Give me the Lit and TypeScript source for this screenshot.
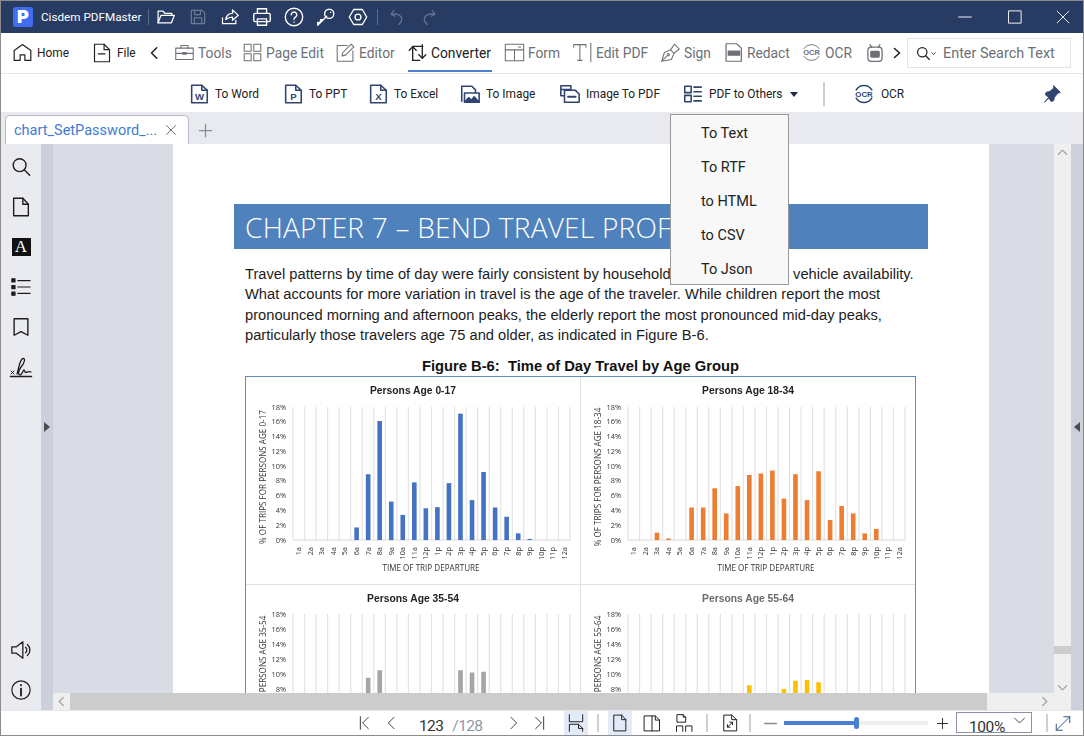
import { LitElement, css, html, svg, TemplateResult } from "lit";
import { customElement, property } from "lit/decorators.js";

const icon = (size: number, body: unknown, sw = 1.5) => html`<svg
  width=${size}
  height=${size}
  viewBox="0 0 24 24"
  fill="none"
  stroke="currentColor"
  stroke-width=${sw}
  stroke-linecap="round"
  stroke-linejoin="round"
>
  ${body}
</svg>`;

const HOURS = "1a 2a 3a 4a 5a 6a 7a 8a 9a 10a 11a 12p 1p 2p 3p 4p 5p 6p 7p 8p 9p 10p 11p 12a".split(" ");

@customElement("age-chart")
export class AgeChart extends LitElement {
  static styles = css`
    :host {
      display: block;
    }
    svg {
      display: block;
      filter: blur(0.3px);
    }
    .title {
      font: bold 10.3px "Liberation Sans", sans-serif;
      text-anchor: middle;
    }
    .tick {
      font: 7.4px "Open Sans", sans-serif;
      fill: #333;
    }
    .axis {
      font: 8.1px "Open Sans", sans-serif;
      fill: #333;
      text-anchor: middle;
    }
  `;

  @property() heading = "";
  @property() axis = "";
  @property() color = "#4472c4";
  @property() titleColor = "#222";
  @property({ type: Array }) values: number[] = [];
  @property({ type: Number }) top = 30;
  @property({ type: Number }) unit = 7.39;

  render() {
    const x0 = 47;
    const step = 277 / 24;
    const bottom = this.top + this.unit * 18;
    const ticks = [0, 2, 4, 6, 8, 10, 12, 14, 16, 18];
    return html`<svg width="334" height="207">
      <text class="title" x="167" y="16.500" style="fill:${this.titleColor}">${this.heading}</text>
      ${HOURS.concat("").map((_, i) => {
        const x = x0 + i * step;
        return svg`<line x1=${x} x2=${x} y1=${this.top} y2=${bottom} stroke="#e3e3e3" stroke-width="1.2" />`;
      })}
      <line x1=${x0} x2=${x0 + 277} y1=${bottom} y2=${bottom} stroke="#d9d9d9" />
      ${this.values.map((v, i) =>
        v
          ? svg`<rect x=${x0 + i * step + 3.6} width="4.6" y=${bottom - v * this.unit} height=${v * this.unit} fill=${this.color} />`
          : ""
      )}
      ${ticks.map(
        (t) => svg`<text class="tick" x="40" y=${bottom - t * this.unit + 2.5} text-anchor="end">${t}%</text>`
      )}
      ${HOURS.map((h, i) => {
        const x = x0 + (i + 0.5) * step + 2.5;
        return svg`<text class="tick" text-anchor="end" transform="translate(${x} ${bottom + 7}) rotate(-90)">${h}</text>`;
      })}
      <text class="axis" x="185" y=${bottom + 31}>TIME OF TRIP DEPARTURE</text>
      <text class="axis" transform="translate(20 100) rotate(-90)">${this.axis}</text>
    </svg>`;
  }
}

const docIcon = (letter: string) =>
  icon(
    22,
    svg`<path d="M4 2.500h11L21 8v13.500H4z" /><path d="M15 2.500V8h6" />
    <text x="12.500" y="18.500" font-size="10.500" font-weight="700" font-family="Liberation Sans" text-anchor="middle" fill="currentColor" stroke="none">${letter}</text>`,
    1.7
  );

const ocrMark = (size: number, sw: number) =>
  icon(
    size,
    svg`<path d="M3.500 7.500A10 10 0 0 1 20.500 7.500" /><path d="M3.500 16.500A10 10 0 0 0 20.500 16.500" />
    <text x="12" y="15" font-size="8.600" font-weight="700" font-family="Liberation Sans" text-anchor="middle" fill="currentColor" stroke="none">OCR</text>`,
    sw
  );

const titleTools: TemplateResult[] = [
  icon(20, svg`<path d="M2.500 19V5h6l2 2.500H19V10" /><path d="M2.500 19l3.500-9h16l-3.500 9z" />`),
  icon(20, svg`<path d="M4 4h13l3 3v13H4z" /><path d="M8 4v5h7V4" /><path d="M7.500 20v-7h9v7" />`),
  icon(20, svg`<path d="M3 13v7h16v-4" /><path d="M7 15c.5-5 4-7.500 8-7.500V3.500l7 6.500-7 6v-4c-3 0-6 1-8 3z" />`),
  icon(22, svg`<path d="M7 8V3h10v5" /><rect x="3" y="8" width="18" height="9" rx="1.500" /><path d="M7 14h10v7H7z" />`),
  icon(22, svg`<circle cx="12" cy="12" r="9.500" /><path d="M9 9.500a3 3 0 1 1 4.500 2.700c-1 .6-1.500 1.200-1.500 2.300" /><path d="M12 17.500v.1" />`),
  icon(22, svg`<circle cx="15.500" cy="8.500" r="5" /><path d="M12 12L3 21v-3h3v-3h3l3.800-3.800" /><path d="M17 7v.1" />`),
  icon(22, svg`<path d="M2.500 12L7.300 3.800h9.400L21.500 12l-4.800 8.200H7.300z" /><circle cx="12" cy="12" r="3.200" />`),
];

type MenuEntry = { label: string; w: number; muted?: boolean; active?: boolean; icon: TemplateResult };

const menu: MenuEntry[] = [
  { label: "Tools", w: 55, muted: true, icon: icon(21, svg`<rect x="2" y="7" width="20" height="13" /><path d="M8 7V4h8v3" /><path d="M2 13h20" /><path d="M10 12h4v2h-4z" />`, 1.2) },
  { label: "Page Edit", w: 80, muted: true, icon: icon(21, svg`<rect x="2.500" y="2.500" width="8" height="8" /><rect x="13.500" y="2.500" width="8" height="8" /><rect x="2.500" y="13.500" width="8" height="8" /><rect x="13.500" y="13.500" width="8" height="8" />`, 1.2) },
  { label: "Editor", w: 59, muted: true, icon: icon(21, svg`<path d="M14 4H2.500v18h18V10" /><path d="M8 16l1-4L18.500 2.500l3 3L12 15z" />`, 1.2) },
  { label: "Converter", w: 84, active: true, icon: icon(21, svg`<path d="M6.500 21V5.500" /><path d="M2.500 9.500l4-4 4 4" /><path d="M6.500 5H18" /><path d="M17.500 3v15.500" /><path d="M13.500 14.500l4 4 4-4" /><path d="M6.500 21h8" />`, 1.5) },
  { label: "Form", w: 55, muted: true, icon: icon(21, svg`<rect x="1.500" y="2.500" width="21" height="19" /><path d="M1.500 9h21" /><path d="M12 9v12.500" /><path d="M16.500 5.800h2.500" />`, 1.2) },
  { label: "Edit PDF", w: 75, muted: true, icon: icon(21, svg`<path d="M2 6V3h14v3" /><path d="M9 3v18" /><path d="M6.500 21h5" /><path d="M21.500 1.500v21" />`, 1.2) },
  { label: "Sign", w: 50, muted: true, icon: icon(21, svg`<path d="M2 22l3-10 7-3 4 4-3 7z" /><path d="M2 22l6.500-6.500" /><circle cx="9.500" cy="14.500" r="1.200" /><path d="M12 9l4.500-6.500L22 8l-6 5" />`, 1.2) },
  { label: "Redact", w: 65, muted: true, icon: icon(21, svg`<path d="M3.500 2h12L21 7v15H3.500z" /><path d="M6 10.500h13v4.500H6z" fill="currentColor" />`, 1.4) },
  { label: "OCR", w: 51, muted: true, icon: ocrMark(21, 1.1) },
];

const ribbon = [
  { label: "To Word", w: 69, icon: docIcon("W") },
  { label: "To PPT", w: 60, icon: docIcon("P") },
  { label: "To Excel", w: 67, icon: docIcon("X") },
  {
    label: "To Image",
    w: 75,
    icon: icon(22, svg`<path d="M3 20V3.500h11l4 4V10" /><rect x="6" y="11" width="16" height="10" /><path d="M6 21l4.500-5 3 3 3-4 5.500 6z" fill="currentColor" />`, 1.7),
  },
  {
    label: "Image To PDF",
    w: 98,
    icon: icon(22, svg`<path d="M2 3h11v4H2zM2 3v11h3" /><path d="M6 8h12l4 4v9H6z" /><path d="M10 15h8" stroke-width="2.400" />`, 1.7),
  },
];

const rail = [
  icon(22, svg`<circle cx="10.500" cy="10" r="7" /><path d="M15.500 15l6 6" />`),
  icon(22, svg`<path d="M4 2.500h10L20 9v12.500H4z" /><path d="M14 2.500V9h6" />`),
  html`<span class="letter-a">A</span>`,
  icon(22, svg`<path d="M8.500 5H22M8.500 12H22M8.500 19H22" /><path d="M2 3h3.500v3.500H2zM2 10.300h3.500v3.500H2zM2 17.500h3.500V21H2z" fill="currentColor" />`, 1.2),
  icon(22, svg`<path d="M4.500 3h15v18L12 17l-7.500 4z" />`),
  icon(
    24,
    svg`<path d="M1.500 21.500h21" /><path d="M2 16l3 3M5 16l-3 3" stroke-width="1" /><path d="M8 19C10 12 11 4 14 3.500c3-.5 1 5.500-2 8.500-3 4-3 8-1 8s3-5 4-5 .5 3 2 2.500 2-1.500 5-.5" stroke-width="1.300" />`
  ),
];

type StatusCell = { w: number; cls?: string; body?: unknown };

const status: StatusCell[] = [
  { w: 26, body: icon(16, svg`<path d="M5 2.500v19" /><path d="M17 3.500L8.500 12l8.500 8.500" />`, 1.3) },
  { w: 28, body: icon(16, svg`<path d="M15 3.500L6.500 12l8.500 8.500" />`, 1.3) },
  { w: 94, cls: "pages", body: html`<span class="page-now">123</span><span class="page-all">/128</span>` },
  { w: 26, body: icon(16, svg`<path d="M9 3.500l8.500 8.500L9 20.500" />`, 1.3) },
  { w: 26, body: icon(16, svg`<path d="M7 3.500l8.500 8.500L7 20.500" /><path d="M19 2.500v19" />`, 1.3) },
  { w: 12 },
  { w: 24, cls: "on", body: icon(20, svg`<path d="M4 2v8.500h16V2" /><path d="M4 22v-8.500h11l5 5V22" /><path d="M15 13.500v5h5" />`, 1.2) },
  { w: 20, cls: "sep" },
  { w: 24, cls: "on", body: icon(20, svg`<path d="M5 2.500h9L19 8v13.500H5z" /><path d="M14 2.500V8h5" />`, 1.2) },
  { w: 40, body: icon(20, svg`<path d="M3 3.500h13l5 5v13H3z" /><path d="M12 3.500v18" /><path d="M16 3.500v5h5" />`, 1.2) },
  { w: 24, body: icon(20, svg`<path d="M4 2h7l3 3v6H4z" /><path d="M11 2v3h3" /><path d="M3 22v-6.500h7.500V22" /><path d="M14 22v-6.500h7.500V22" />`, 1.2) },
  { w: 22, cls: "sep" },
  { w: 24, body: icon(20, svg`<path d="M5 2.500h9L20 8v13.500H5z" /><path d="M14 2.500V8h6" /><path d="M9 17l6-6" /><path d="M9 14v3h3" /><path d="M12 11h3v3" />`, 1.2) },
  { w: 16, cls: "sep" },
  { w: 24, cls: "muted", body: icon(17, svg`<path d="M4 12h16" />`, 2.4) },
  { w: 2 },
  {
    w: 144,
    body: html`<div class="slider"><div class="fill" style="width:${Math.round((72 / 144) * 100)}%"></div><div class="thumb"></div></div>`,
  },
  { w: 2 },
  { w: 24, body: icon(15, svg`<path d="M4 12h16M12 4v16" />`, 1.5) },
  { w: 2 },
  { w: 76, cls: "combo", body: html`<span class="zoom-val">100%</span>${icon(15, svg`<path d="M4 8l8 8 8-8" />`, 1.3)}` },
  { w: 8 },
  { w: 14, cls: "sep" },
  { w: 18, cls: "blue", body: icon(19, svg`<path d="M3 21L21 3" /><path d="M13 3h8v8" /><path d="M3 13v8h8" />`, 1.3) },
];

@customElement("app-root")
export class AppRoot extends LitElement {
  static styles = css`
    :host {
      display: flex;
      flex-direction: column;
      width: 1084px;
      height: 736px;
      box-sizing: border-box;
      border: 1px solid #8c8c8c;
      overflow: hidden;
      background: #fff;
      font-family: Roboto, sans-serif;
      color: #222;
    }

    .titlebar {
      height: 32px;
      flex: none;
      display: flex;
      align-items: center;
      background: #283b63;
      color: #fff;
      padding-left: 12px;
    }
    .logo {
      width: 20px;
      height: 20px;
      border-radius: 3px;
      background: #3f6ff0;
      font: 900 18px/20px "Inter", sans-serif;
      text-align: center;
      margin-right: 8px;
    }
    .app-name {
      font-size: 11.700px;
      width: 100px;
      white-space: nowrap;
    }
    .bar-sep {
      width: 1px;
      height: 16px;
      background: #5d6b8a;
    }
    .name-sep {
      margin: 0 1px 0 7px;
    }
    .tool {
      width: 32px;
      display: flex;
      justify-content: center;
    }
    .tool.off {
      color: #6c7993;
    }
    .undo-sep {
      margin: 0 3px;
    }
    .window-btns {
      margin-left: auto;
      display: flex;
      align-items: center;
    }
    .win {
      width: 50px;
      display: flex;
      justify-content: center;
    }
    .win:last-child {
      width: 40px;
      margin-left: 3px;
    }

    .menu {
      height: 41px;
      flex: none;
      display: flex;
      box-sizing: border-box;
      border-bottom: 1px solid #e4e6ea;
      padding: 0 12px;
    }
    .menu-item {
      height: 39px;
      flex: none;
      display: flex;
      align-items: center;
      gap: 5px;
      font-size: 13.800px;
      white-space: nowrap;
      box-sizing: border-box;
    }
    .menu-item svg {
      flex: none;
      margin: 0 -1.5px;
    }
    .menu-item + .menu-item,
    .chev + .menu-item {
      margin-left: 13px;
    }
    .menu-item.small {
      font-size: 11.900px;
      width: 68px;
    }
    .menu-item.small svg {
      margin: 0;
    }
    .menu-item.small + .menu-item.small {
      width: 41px;
    }
    .menu-item.small + .menu-item.small svg {
      margin-left: -2px;
    }
    .menu-item.muted {
      color: #6d7076;
    }
    .menu-item.active {
      box-shadow: inset 0 -2px #4a7fd4;
    }
    .chev {
      height: 39px;
      flex: none;
      display: flex;
      align-items: center;
      margin-left: 13px;
    }
    .chev.back {
      width: 14px;
      justify-content: flex-end;
    }
    .chev.next {
      width: 12px;
      margin-left: 9px;
    }
    .ai {
      color: #6d7076;
      width: 16px;
    }
    .search {
      margin: 5px 0 0 auto;
      width: 164px;
      height: 30px;
      box-sizing: border-box;
      border: 1px solid #e2e4e8;
      display: flex;
      align-items: center;
      padding-left: 8px;
      font-size: 14.400px;
      color: #6d7076;
      white-space: nowrap;
    }
    .search svg {
      color: #222;
      flex: none;
    }
    .search span {
      margin-left: 7px;
    }

    .ribbon {
      height: 38px;
      flex: none;
      display: flex;
      align-items: center;
      box-sizing: border-box;
      padding: 2px 0 0 186.500px;
      gap: 25px;
      font-size: 11.900px;
      color: #222;
    }
    .rb {
      flex: none;
      display: flex;
      align-items: center;
      gap: 5.500px;
      white-space: nowrap;
    }
    .rb svg {
      color: #2f4570;
      flex: none;
    }
    .caret {
      width: 0;
      height: 0;
      border: 4.500px solid transparent;
      border-top: 5px solid #1d2b45;
      border-bottom: 0;
      margin-left: 2.500px;
    }
    .rb-sep {
      width: 2px;
      height: 24px;
      background: #cdcfd3;
      flex: none;
      margin-right: 3px;
    }
    .pin {
      margin-left: auto;
      margin-right: 21px;
      color: #2f4570;
      display: flex;
    }

    .tabs {
      height: 32px;
      flex: none;
      display: flex;
      align-items: flex-end;
      background: #e9eaef;
      padding-left: 4px;
    }
    .tab {
      width: 184px;
      height: 29px;
      box-sizing: border-box;
      background: #fff;
      border: 1px solid #b9bcc4;
      border-bottom: 0;
      border-radius: 5px 5px 0 0;
      display: flex;
      align-items: center;
      justify-content: space-between;
      padding: 0 11px 0 8px;
      font-size: 14.500px;
      color: #3f7bd6;
      white-space: nowrap;
    }
    .tab svg {
      color: #666;
    }
    .add {
      margin: 0 0 6px 9px;
      color: #8a8c92;
      display: flex;
    }

    .main {
      flex: 1;
      min-height: 0;
      display: flex;
    }
    .sidebar {
      width: 40px;
      flex: none;
      background: #e9ebf0;
      display: flex;
      flex-direction: column;
      justify-content: space-between;
      padding-top: 3px;
      box-sizing: border-box;
    }
    .rail-item {
      height: 40px;
      display: flex;
      align-items: center;
      justify-content: center;
      color: #1d1d1d;
    }
    .letter-a {
      width: 19px;
      height: 18px;
      background: #111;
      color: #fff;
      font: 17px/18px "Liberation Serif", serif;
      text-align: center;
    }
    .strip {
      width: 12px;
      flex: none;
      background: #ccd0da;
      display: flex;
      align-items: center;
      justify-content: center;
      padding-bottom: 1px;
      box-sizing: border-box;
    }
    .tri-right {
      border: 5px solid transparent;
      border-left: 6px solid #4a4d55;
      border-right: 0;
    }
    .tri-left {
      border: 5px solid transparent;
      border-right: 6px solid #4a4d55;
      border-left: 0;
    }
    .doc-col {
      width: 1001px;
      flex: none;
      display: flex;
      flex-direction: column;
    }
    .doc {
      flex: 1;
      min-height: 0;
      background: #d9dce5;
      padding-left: 120px;
      overflow: hidden;
    }
    .page {
      width: 816px;
      height: 100%;
      background: #fff;
      padding: 60px 0 0 61px;
      box-sizing: border-box;
      overflow: hidden;
    }
    .band {
      width: 694px;
      height: 45px;
      background: #4f81bd;
      color: #fff;
      font: 300 28px/47px "Open Sans", sans-serif;
      letter-spacing: 0.25px;
      padding-left: 11px;
      box-sizing: border-box;
      white-space: nowrap;
      overflow: hidden;
    }
    .para {
      margin: 15px 0 0 11px;
      font: 14.700px/20.300px "Liberation Sans", sans-serif;
      color: #1c1c1c;
      white-space: pre;
    }
    .fig-title {
      margin: 11px 0 0 11px;
      width: 671px;
      text-align: center;
      font: bold 14.750px/20px "Liberation Sans", sans-serif;
      color: #111;
    }
    .frame {
      margin-left: 11px;
      width: 671px;
      box-sizing: border-box;
      border: 1px solid #5b8cc7;
      display: grid;
      grid-template-columns: 335px 334px;
      grid-template-rows: 208px 208px;
    }
    .cell-a {
      border-right: 1px solid #e2e2e2;
      border-bottom: 1px solid #e2e2e2;
    }
    .cell-b {
      border-bottom: 1px solid #e2e2e2;
    }
    .cell-c {
      border-right: 1px solid #e2e2e2;
    }

    .hbar {
      height: 17px;
      flex: none;
      display: flex;
      background: #efefef;
      color: #9a9a9a;
      align-items: center;
    }
    .hbar .arrow {
      width: 17px;
      display: flex;
      justify-content: center;
      flex: none;
    }
    .hbar .thumb-h {
      width: 917px;
      height: 100%;
      background: #cccccc;
      flex: none;
    }
    .hbar .arrow.end {
      margin-left: auto;
      margin-right: 1px;
    }
    .vbar {
      width: 17px;
      flex: none;
      background: #efefef;
      color: #9a9a9a;
      display: flex;
      flex-direction: column;
      align-items: center;
      padding: 3px 0 17px;
      box-sizing: border-box;
    }
    .vbar svg {
      flex: none;
    }
    .vthumb {
      width: 100%;
      height: 8px;
      background: #cccccc;
      margin-top: auto;
      margin-bottom: 28px;
    }

    .status {
      height: 25px;
      flex: none;
      box-sizing: border-box;
      border-top: 1px solid #e6e6e6;
      display: flex;
      padding-left: 351px;
      color: #222;
    }
    .st {
      flex: none;
      display: flex;
      align-items: center;
      justify-content: center;
      height: 100%;
    }
    .st.on {
      background: #e2ebf7;
    }
    .st.sep::after {
      content: "";
      width: 2px;
      height: 18px;
      background: #cfcfcf;
    }
    .st.muted {
      color: #8c8c8c;
    }
    .st.blue {
      color: #2f4f86;
    }
    .st.pages {
      justify-content: flex-start;
      padding-left: 13px;
      box-sizing: border-box;
      font-size: 15.500px;
      letter-spacing: -0.6px;
      padding-top: 5px;
    }
    .page-now {
      color: #333;
    }
    .page-all {
      color: #8f97a6;
      margin-left: 9px;
    }
    .slider {
      position: relative;
      width: 100%;
      height: 4px;
      background: #efefef;
    }
    .fill {
      height: 100%;
      background: #4a7fd4;
    }
    .thumb {
      position: absolute;
      left: 70px;
      top: -4px;
      width: 5px;
      height: 12px;
      border-radius: 3px;
      background: #4a7fd4;
    }
    .st.combo {
      box-sizing: border-box;
      height: 21px;
      margin-top: 1px;
      border: 1px solid #8a93a6;
      justify-content: flex-start;
      padding-left: 12px;
      gap: 5px;
      overflow: hidden;
      align-items: flex-start;
    }
    .zoom-val {
      font-size: 15.500px;
      letter-spacing: -0.4px;
      line-height: 18px;
      padding-top: 5px;
      color: #333;
      width: 38px;
      flex: none;
    }
    .combo svg {
      flex: none;
    }

    .dropdown {
      position: absolute;
      left: 670px;
      top: 114px;
      width: 119px;
      height: 171px;
      box-sizing: border-box;
      background: #f8f8f8;
      border: 1px solid #999;
      padding: 2px 0 0 30px;
      font-size: 14.500px;
      color: #222;
    }
    .dropdown div {
      height: 34px;
      line-height: 33px;
    }
  `;

  render() {
    return html`
      <div class="titlebar">
        <div class="logo">P</div>
        <div class="app-name">Cisdem PDFMaster</div>
        <div class="bar-sep name-sep"></div>
        ${titleTools.map((t, i) => html`<div class="tool ${i === 1 ? "off" : ""}">${t}</div>`)}
        <div class="bar-sep undo-sep"></div>
        <div class="tool off">${icon(18, svg`<path d="M8 3L4 8l5 3" /><path d="M4.500 8c8-1 14 2 14 7 0 3-2 5-4 7" />`)}</div>
        <div class="tool off">${icon(18, svg`<path d="M16 3l4 5-5 3" /><path d="M19.500 8c-8-1-14 2-14 7 0 3 2 5 4 7" />`)}</div>
        <div class="window-btns">
          <div class="win">${icon(14, svg`<path d="M1 12h22" />`, 1.6)}</div>
          <div class="win">${icon(14, svg`<rect x="1.500" y="1.500" width="21" height="21" />`, 1.6)}</div>
          <div class="win">${icon(14, svg`<path d="M2 2l20 20M22 2L2 22" />`, 1.5)}</div>
        </div>
      </div>

      <div class="menu">
        <div class="menu-item small">
          ${icon(19, svg`<path d="M1.500 22V9.500L12 2l10.500 7.500V22H15v-7H9v7z" />`)}<span>Home</span>
        </div>
        <div class="menu-item small">
          ${icon(20, svg`<path d="M3 1.500h11.500L21 8v14.500H3z" /><path d="M14.500 1.500V8H21" /><path d="M7.500 13h8" />`, 1.4)}<span>File</span>
        </div>
        <div class="chev back">${icon(14, svg`<path d="M15 3l-9 9 9 9" />`, 2.6)}</div>
        ${menu.map(
          (m) => html`<div
            class="menu-item ${m.muted ? "muted" : ""} ${m.active ? "active" : ""}"
            style="width:${m.w}px"
          >
            ${m.icon}<span>${m.label}</span>
          </div>`
        )}
        <div class="menu-item ai">
          ${icon(20, svg`<rect x="3.500" y="5" width="17" height="17" rx="4" /><path d="M6 2l2 3M18 2l-2 3" /><rect x="7" y="10" width="10" height="7" rx="1" fill="currentColor" />`, 1.5)}
        </div>
        <div class="chev next">${icon(12, svg`<path d="M7 3l10 9-10 9" />`, 3.2)}</div>
        <div class="search">
          ${icon(15, svg`<circle cx="10" cy="10" r="7.500" /><path d="M15.500 15.500l6 6" />`, 2)}
          ${icon(5, svg`<path d="M3 8l9 9 9-9" />`, 4)}
          <span>Enter Search Text</span>
        </div>
      </div>

      <div class="ribbon">
        ${ribbon.map((r) => html`<div class="rb" style="width:${r.w}px">${r.icon}<span>${r.label}</span></div>`)}
        <div class="rb">
          ${icon(22, svg`<rect x="3" y="3.500" width="7" height="7" /><rect x="3" y="13.500" width="7" height="7" /><path d="M13 4.500h8M13 9.500h8M13 14.500h8M13 19.500h8" />`, 1.7)}
          <span>PDF to Others</span>
          <span class="caret"></span>
        </div>
        <div class="rb-sep"></div>
        <div class="rb">${ocrMark(22, 1.7)}<span>OCR</span></div>
        <div class="pin">
          ${icon(20, svg`<path d="M14 2l8 8-3 1-4 5-1 4-3 1-3-4-5 5 5-6-4-3 1-3 4-1 5-4z" fill="currentColor" />`, 1)}
        </div>
      </div>

      <div class="tabs">
        <div class="tab">
          <span>chart_SetPassword_...</span>
          ${icon(12, svg`<path d="M3 3l18 18M21 3L3 21" />`, 1.8)}
        </div>
        <div class="add">${icon(15, svg`<path d="M2 12h20M12 2v20" />`, 2)}</div>
      </div>

      <div class="main">
        <div class="sidebar">
          <div>${rail.map((r) => html`<div class="rail-item">${r}</div>`)}</div>
          <div>
            <div class="rail-item">
              ${icon(22, svg`<path d="M2 8.500h5L14 3v18l-7-5.500H2z" /><path d="M17 9a4 4 0 0 1 0 6" /><path d="M19 6a8 8 0 0 1 0 12" />`, 1.4)}
            </div>
            <div class="rail-item">
              ${icon(22, svg`<circle cx="12" cy="12" r="10" /><path d="M12 10.500V18" stroke-width="2" /><path d="M12 6.500v.3" stroke-width="2" />`, 1.3)}
            </div>
          </div>
        </div>
        <div class="strip"><span class="tri-right"></span></div>
        <div class="doc-col">
          <div class="doc">
            <div class="page">
              <div class="band">CHAPTER 7 – BEND TRAVEL PROFILE</div>
              <div class="para">Travel patterns by time of day were fairly consistent by household size, income, and vehicle availability.
What accounts for more variation in travel is the age of the traveler. While children report the most
pronounced morning and afternoon peaks, the elderly report the most pronounced mid-day peaks,
particularly those travelers age 75 and older, as indicated in Figure B-6.</div>
              <div class="fig-title">Figure B-6:&nbsp; Time of Day Travel by Age Group</div>
              <div class="frame">
                <age-chart
                  class="cell-a"
                  heading="Persons Age 0-17"
                  axis="% OF TRIPS FOR PERSONS AGE 0-17"
                  color="#4472c4"
                  .values=${[0, 0, 0, 0, 0, 1.7, 8.9, 16.1, 5.2, 3.4, 7.8, 4.3, 4.45, 7.7, 17.1, 5.4, 9.2, 4.4, 3.15, 0.9, 0.15, 0, 0, 0]}
                ></age-chart>
                <age-chart
                  class="cell-b"
                  heading="Persons Age 18-34"
                  axis="% OF TRIPS FOR PERSONS AGE 18-34"
                  color="#ed7d31"
                  .values=${[0, 0, 1, 0.2, 0, 4.4, 4.4, 7, 3.6, 7.3, 8.8, 9, 9.4, 5.6, 8.9, 5.4, 9.3, 2.7, 4.6, 3.6, 0.9, 1.5, 0, 0]}
                ></age-chart>
                <age-chart
                  class="cell-c"
                  heading="Persons Age 35-54"
                  axis="% OF TRIPS FOR PERSONS AGE 35-54"
                  color="#a5a5a5"
                  .top=${29}
                  .unit=${7.5}
                  .values=${[0, 0, 0, 0, 0, 0, 9.5, 10.5, 0, 0, 0, 0, 0, 0, 10.5, 10.2, 10.3, 0, 0, 0, 0, 0, 0, 0]}
                ></age-chart>
                <age-chart
                  heading="Persons Age 55-64"
                  axis="% OF TRIPS FOR PERSONS AGE 55-64"
                  color="#ffc000"
                  titleColor="#6a6a6a"
                  .top=${29}
                  .unit=${7.5}
                  .values=${[0, 0, 0, 0, 0, 0, 0, 0, 0, 0, 8.5, 0, 0, 8, 9.1, 9.2, 8.9, 0, 0, 0, 0, 0, 0, 0]}
                ></age-chart>
              </div>
            </div>
          </div>
          <div class="hbar">
            <div class="arrow">${icon(11, svg`<path d="M16 3l-9 9 9 9" />`, 2.4)}</div>
            <div class="thumb-h"></div>
            <div class="arrow end">${icon(11, svg`<path d="M8 3l9 9-9 9" />`, 2.4)}</div>
          </div>
        </div>
        <div class="vbar">
          ${icon(11, svg`<path d="M3 16l9-9 9 9" />`, 2.4)}
          <div class="vthumb"></div>
          ${icon(11, svg`<path d="M3 8l9 9 9-9" />`, 2.4)}
        </div>
        <div class="strip"><span class="tri-left"></span></div>
      </div>

      <div class="status">
        ${status.map((c) => html`<div class="st ${c.cls ?? ""}" style="width:${c.w}px">${c.body ?? ""}</div>`)}
      </div>

      <div class="dropdown">
        <div>To Text</div>
        <div>To RTF</div>
        <div>to HTML</div>
        <div>to CSV</div>
        <div>To Json</div>
      </div>
    `;
  }
}
